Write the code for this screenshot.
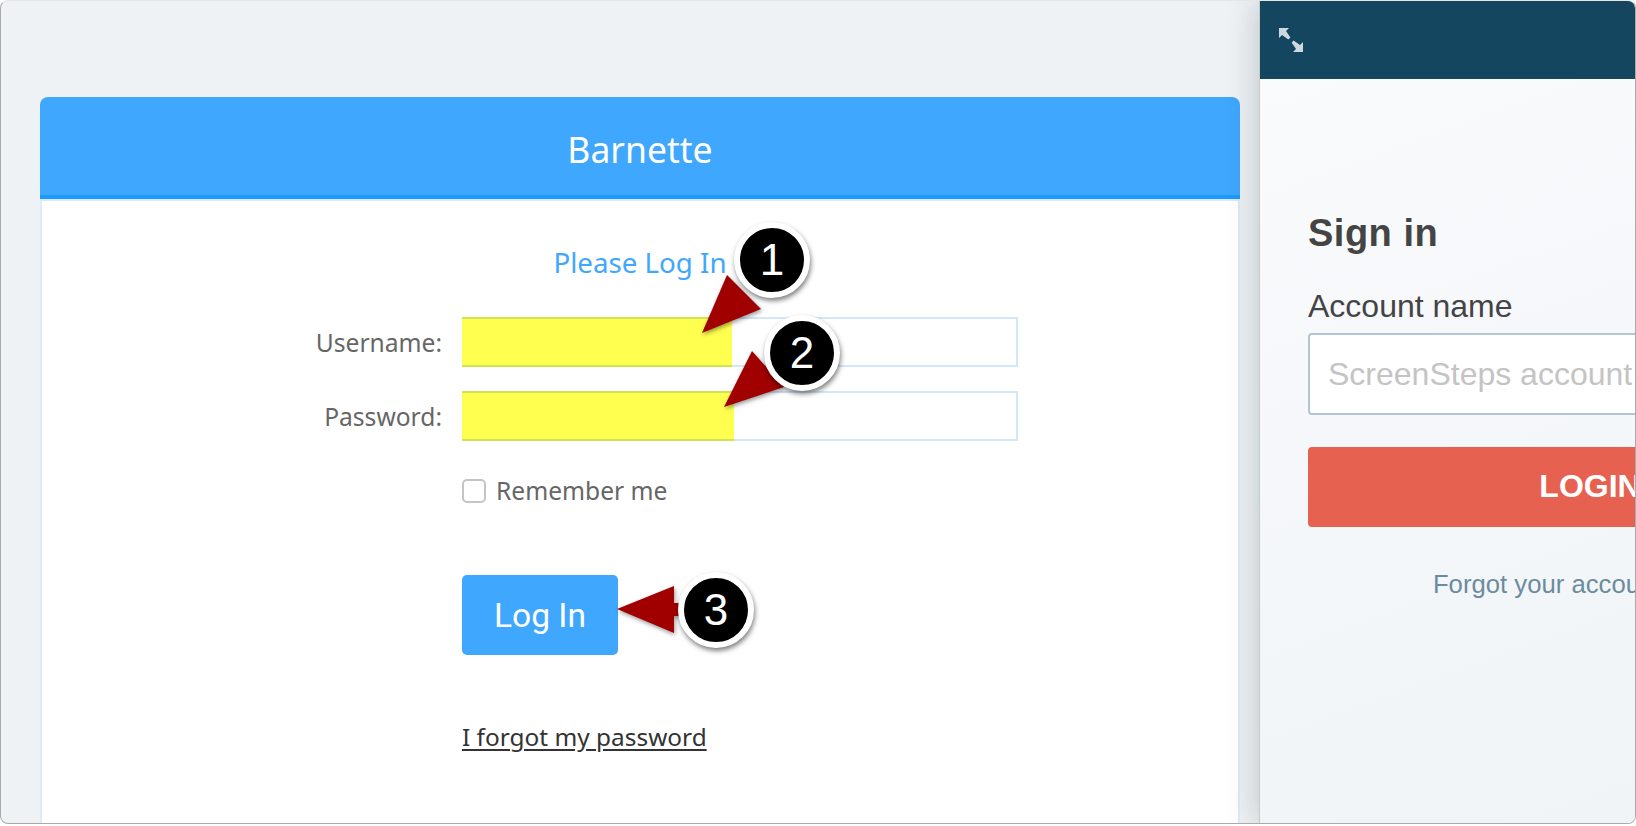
<div class="page">
	<div class="window">
		<main class="main">
			<section class="card">
				<header class="card-head">Barnette</header>
				<div class="card-body">
					<h2>Please Log In</h2>
					<div class="row">
						<label for="user">Username:</label>
						<div class="field"><input id="user" class="auto user" type="text" /></div>
					</div>
					<div class="row">
						<label for="pass">Password:</label>
						<div class="field"><input id="pass" class="auto pass" type="password" /></div>
					</div>
					<div class="remember">
						<span class="check"></span>
						<span>Remember me</span>
					</div>
					<button class="login">Log In</button>
					<a class="forgot" href="#forgot">I forgot my password</a>
				</div>
			</section>
		</main>

		<aside class="panel">
			<div class="panel-head">
				<svg class="expand" width="24" height="24" viewBox="0 0 24 24">
					<path d="M0 0H10L7 3L11.4 9.4L9.4 11.4L3 7L0 10Z" />
					<path d="M24 24H14L17 21L12.6 14.6L14.6 12.6L21 17L24 14Z" />
				</svg>
			</div>
			<div class="panel-body">
				<h1>Sign in</h1>
				<label class="acct" for="acct">Account name</label>
				<input id="acct" class="acct-input" type="text" placeholder="ScreenSteps account name" />
				<button class="panel-login">LOGIN</button>
				<p class="acct-forgot">Forgot your account name?</p>
			</div>
		</aside>

		<svg class="arrows" width="1636" height="826" viewBox="0 0 1636 826">
			<polygon points="702,333 727,275 761,309" />
			<polygon points="724,407 752,351 784,387" />
			<polygon points="617,609 674,586 674,603 700,603 700,616 674,616 674,633" />
		</svg>
		<span class="badge one">1</span>
		<span class="badge two">2</span>
		<span class="badge three">3</span>
	</div>
</div>

<style>
	:global(body) {
		margin: 0;
		background: #fff;
	}

	.page {
		width: 1636px;
		height: 826px;
		overflow: hidden;
	}

	.window {
		position: relative;
		display: flex;
		box-sizing: border-box;
		height: 824px;
		border: 1px solid #aaa;
		border-top-color: #e6e6e6;
		border-radius: 8px;
		overflow: hidden;
		background: #eef2f5;
	}

	.main {
		flex: 1;
		min-width: 0;
		padding: 96px 19px 0 39px;
	}

	.card {
		height: 800px;
		border-radius: 8px 8px 0 0;
		background: #fff;
		font-family: "Noto Sans", "Open Sans", sans-serif;
	}

	.card-head {
		height: 98px;
		line-height: 105px;
		border-bottom: 4px solid #1a9bff;
		border-radius: 8px 8px 0 0;
		background: #3fa7fd;
		color: #fff;
		font-size: 35.5px;
		text-align: center;
	}

	.card-body {
		box-sizing: border-box;
		height: 698px;
		border: 2px solid #dcebf8;
		background: #fff;
	}

	h2 {
		margin: 40px 0 34px;
		color: #3fa7fd;
		font-size: 27.7px;
		font-weight: 400;
		line-height: 42px;
		text-align: center;
	}

	.row {
		display: flex;
		align-items: center;
		height: 50px;
		margin-bottom: 24px;
	}

	.row label {
		width: 400px;
		color: #666;
		font-size: 24.6px;
		text-align: right;
	}

	.field {
		margin-left: 20px;
		box-sizing: border-box;
		width: 556px;
		height: 50px;
		border: 2px solid #d3e7fa;
		background: #fff;
	}

	.auto {
		display: block;
		box-sizing: border-box;
		height: 50px;
		margin: -2px 0 0 -2px;
		padding: 0;
		border: 0;
		border-top: 2px solid #cde552;
		border-bottom: 2px solid #cde552;
		background: #ffff4f;
	}

	.user {
		width: 270px;
	}

	.pass {
		width: 272px;
	}

	.remember {
		display: flex;
		align-items: center;
		gap: 10px;
		margin: 36px 0 0 420px;
		color: #666;
		font-size: 24.6px;
		line-height: 28px;
	}

	.check {
		box-sizing: border-box;
		width: 24px;
		height: 24px;
		border: 2px solid #c4c4c4;
		border-radius: 5px;
		background: #fff;
	}

	.login {
		display: block;
		width: 156px;
		height: 80px;
		margin: 70px 0 0 420px;
		padding: 0;
		border: 0;
		border-radius: 5px;
		background: #3fa7fd;
		color: #fff;
		font-family: "Roboto", "Liberation Sans", sans-serif;
		font-size: 33.6px;
	}

	.forgot {
		display: inline-block;
		margin: 67px 0 0 420px;
		color: #333;
		font-size: 24.4px;
		line-height: 30px;
		text-decoration: underline;
		text-underline-offset: 3px;
	}

	.panel {
		position: relative;
		flex: none;
		width: 375px;
		overflow: hidden;
		border-left: 1px solid #c6cacd;
		background: linear-gradient(160deg, #fafbfd 0%, #f0f4f7 100%);
		box-shadow: -3px 0 28px rgba(40, 50, 60, 0.22);
		font-family: "Liberation Sans", Arial, sans-serif;
	}

	.panel-head {
		height: 78px;
		background: #15465f;
	}

	.expand {
		display: block;
		padding: 27px 0 0 19px;
		fill: #cdd8df;
	}

	.panel-body {
		width: 564px;
		padding: 0 0 0 48px;
	}

	h1 {
		margin: 132px 0 0;
		color: #444;
		font-size: 38px;
		letter-spacing: 0.5px;
		line-height: 44px;
	}

	.acct {
		display: block;
		margin-top: 32px;
		color: #444;
		font-size: 32px;
		line-height: 38px;
	}

	.acct-input {
		display: block;
		box-sizing: border-box;
		width: 564px;
		height: 82px;
		margin-top: 8px;
		padding: 0 18px;
		border: 2px solid #b3c5d0;
		border-radius: 4px;
		background: #fff;
		font-family: inherit;
		font-size: 32px;
	}

	.acct-input::placeholder {
		color: #c4c4c4;
		opacity: 1;
	}

	.panel-login {
		display: block;
		width: 564px;
		height: 80px;
		margin-top: 32px;
		padding: 0 0 2px;
		border: 0;
		border-radius: 4px;
		background: #e76151;
		color: #fff;
		font-family: inherit;
		font-size: 32px;
		font-weight: 700;
	}

	.acct-forgot {
		margin: 42px 0 0;
		color: #6b8c9e;
		font-size: 25.7px;
		line-height: 30px;
		text-align: center;
	}

	.arrows {
		position: absolute;
		top: -1px;
		left: -1px;
		fill: #a00000;
		filter: drop-shadow(1px 2px 2px rgba(0, 0, 0, 0.4));
		pointer-events: none;
	}

	.badge {
		position: absolute;
		box-sizing: border-box;
		width: 76px;
		height: 76px;
		border: 6px solid #fff;
		border-radius: 50%;
		background: #000;
		box-shadow: 1px 3px 5px rgba(0, 0, 0, 0.5);
		color: #fff;
		font-family: "Liberation Sans", Arial, sans-serif;
		font-size: 44px;
		line-height: 64px;
		text-align: center;
	}

	.one {
		top: 221px;
		left: 733px;
	}

	.two {
		top: 314px;
		left: 763px;
	}

	.three {
		top: 571px;
		left: 677px;
	}
</style>
